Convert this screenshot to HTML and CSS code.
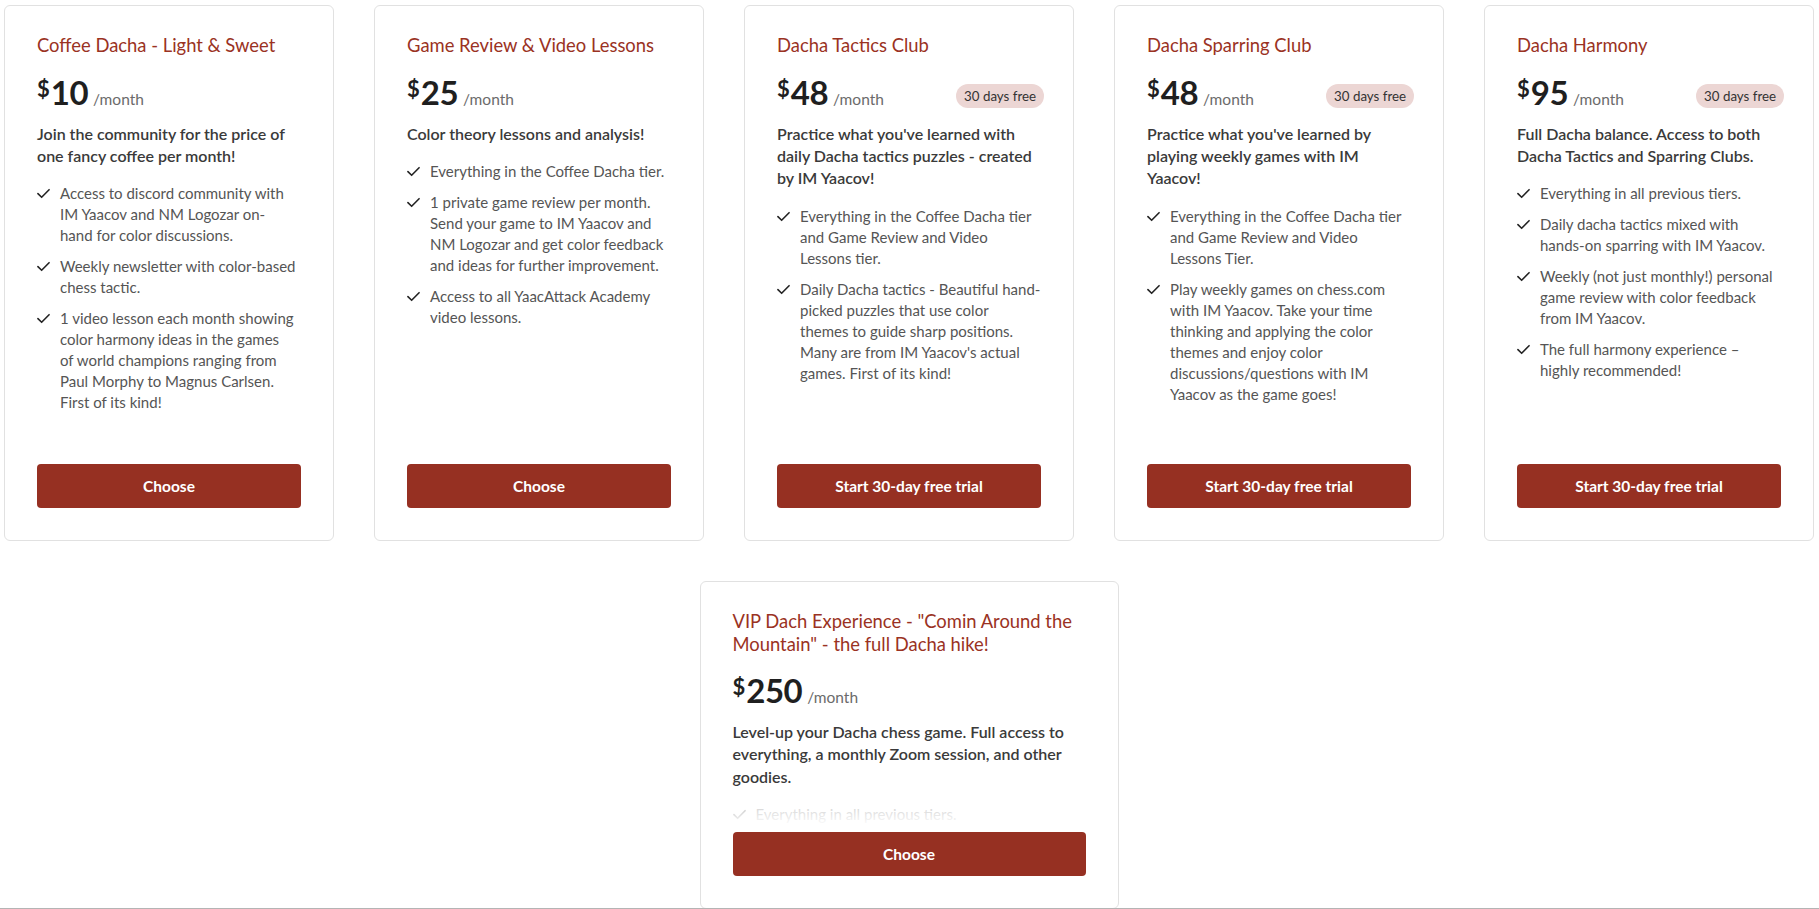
FILE: index.html
```html
<!DOCTYPE html>
<html lang="en">
<head>
<meta charset="utf-8">
<title>Dacha Membership Tiers</title>
<link rel="stylesheet" href="styles.css">
</head>
<body>
<main class="plans">
  <section class="card">
    <h2 class="title">Coffee Dacha - Light &amp; Sweet</h2>
    <div class="price"><span class="cur">$</span><span class="amt">10</span><span class="per">/month</span></div>
    <p class="desc">Join the community for the price of one fancy coffee per month!</p>
    <ul class="features">
      <li><svg class="check" viewBox="0 0 14 11"><path d="M1 5.6 L5 9.6 L13 1.4"/></svg><span>Access to discord community with IM&nbsp;Yaacov and NM&nbsp;Logozar on-<br>hand for color discussions.</span></li>
      <li><svg class="check" viewBox="0 0 14 11"><path d="M1 5.6 L5 9.6 L13 1.4"/></svg><span>Weekly newsletter with color-based chess tactic.</span></li>
      <li><svg class="check" viewBox="0 0 14 11"><path d="M1 5.6 L5 9.6 L13 1.4"/></svg><span>1 video lesson each month showing color harmony ideas in the games<br>of world champions ranging from Paul Morphy to Magnus Carlsen. First of its kind!</span></li>
    </ul>
    <button class="btn">Choose</button>
  </section>

  <section class="card">
    <h2 class="title">Game Review &amp; Video Lessons</h2>
    <div class="price"><span class="cur">$</span><span class="amt">25</span><span class="per">/month</span></div>
    <p class="desc">Color theory lessons and analysis!</p>
    <ul class="features">
      <li><svg class="check" viewBox="0 0 14 11"><path d="M1 5.6 L5 9.6 L13 1.4"/></svg><span>Everything in the Coffee Dacha tier.</span></li>
      <li><svg class="check" viewBox="0 0 14 11"><path d="M1 5.6 L5 9.6 L13 1.4"/></svg><span>1 private game review per month. Send your game to IM&nbsp;Yaacov and NM&nbsp;Logozar and get color feedback and ideas for further improvement.</span></li>
      <li><svg class="check" viewBox="0 0 14 11"><path d="M1 5.6 L5 9.6 L13 1.4"/></svg><span>Access to all YaacAttack Academy video lessons.</span></li>
    </ul>
    <button class="btn">Choose</button>
  </section>

  <section class="card">
    <h2 class="title">Dacha Tactics Club</h2>
    <div class="price"><span class="cur">$</span><span class="amt">48</span><span class="per">/month</span><span class="badge">30 days free</span></div>
    <p class="desc">Practice what you've learned with daily Dacha tactics puzzles - created by IM&nbsp;Yaacov!</p>
    <ul class="features">
      <li><svg class="check" viewBox="0 0 14 11"><path d="M1 5.6 L5 9.6 L13 1.4"/></svg><span>Everything in the Coffee Dacha tier and Game Review and Video Lessons tier.</span></li>
      <li><svg class="check" viewBox="0 0 14 11"><path d="M1 5.6 L5 9.6 L13 1.4"/></svg><span>Daily Dacha tactics - Beautiful hand-picked puzzles that use color<br>themes to guide sharp positions. Many are from IM&nbsp;Yaacov's actual<br>games. First of its kind!</span></li>
    </ul>
    <button class="btn">Start 30-day free trial</button>
  </section>

  <section class="card">
    <h2 class="title">Dacha Sparring Club</h2>
    <div class="price"><span class="cur">$</span><span class="amt">48</span><span class="per">/month</span><span class="badge">30 days free</span></div>
    <p class="desc">Practice what you've learned by playing weekly games with IM Yaacov!</p>
    <ul class="features">
      <li><svg class="check" viewBox="0 0 14 11"><path d="M1 5.6 L5 9.6 L13 1.4"/></svg><span>Everything in the Coffee Dacha tier and Game Review and Video Lessons Tier.</span></li>
      <li><svg class="check" viewBox="0 0 14 11"><path d="M1 5.6 L5 9.6 L13 1.4"/></svg><span>Play weekly games on chess.com with IM&nbsp;Yaacov. Take your time thinking and applying the color themes and enjoy color discussions/questions with IM Yaacov as the game goes!</span></li>
    </ul>
    <button class="btn">Start 30-day free trial</button>
  </section>

  <section class="card">
    <h2 class="title">Dacha Harmony</h2>
    <div class="price"><span class="cur">$</span><span class="amt">95</span><span class="per">/month</span><span class="badge">30 days free</span></div>
    <p class="desc">Full Dacha balance. Access to both Dacha Tactics and Sparring Clubs.</p>
    <ul class="features">
      <li><svg class="check" viewBox="0 0 14 11"><path d="M1 5.6 L5 9.6 L13 1.4"/></svg><span>Everything in all previous tiers.</span></li>
      <li><svg class="check" viewBox="0 0 14 11"><path d="M1 5.6 L5 9.6 L13 1.4"/></svg><span>Daily dacha tactics mixed with hands-on sparring with IM&nbsp;Yaacov.</span></li>
      <li><svg class="check" viewBox="0 0 14 11"><path d="M1 5.6 L5 9.6 L13 1.4"/></svg><span>Weekly (not just monthly!) personal game review with color feedback from IM&nbsp;Yaacov.</span></li>
      <li><svg class="check" viewBox="0 0 14 11"><path d="M1 5.6 L5 9.6 L13 1.4"/></svg><span>The full harmony experience – highly recommended!</span></li>
    </ul>
    <button class="btn">Start 30-day free trial</button>
  </section>

  <section class="card card-vip">
    <h2 class="title">VIP Dach Experience - "Comin Around the Mountain" - the full Dacha hike!</h2>
    <div class="price"><span class="cur">$</span><span class="amt">250</span><span class="per">/month</span></div>
    <p class="desc">Level-up your Dacha chess game. Full access to everything, a monthly Zoom session, and other goodies.</p>
    <div class="fade-wrap">
      <ul class="features">
        <li><svg class="check" viewBox="0 0 14 11"><path d="M1 5.6 L5 9.6 L13 1.4"/></svg><span>Everything in all previous tiers.</span></li>
      </ul>
    </div>
    <button class="btn">Choose</button>
  </section>
</main>
</body>
</html>
```
FILE: styles.css
```css
* { box-sizing: border-box; }

html, body {
  margin: 0;
  padding: 0;
  background: #ffffff;
  overflow: hidden;
}

body {
  font-family: "Lato", "Segoe UI", "Liberation Sans", sans-serif;
  color: #333333;
  height: 909px;
}

body::after {
  content: "";
  position: fixed;
  left: 0;
  right: 0;
  bottom: 0;
  height: 1px;
  background: #b4b4b4;
}

.plans {
  display: flex;
  flex-wrap: wrap;
  justify-content: center;
  gap: 40px;
  padding: 5px 5px 0 4px;
}

.card {
  width: 330px;
  height: 536px;
  display: flex;
  flex-direction: column;
  border: 1px solid #e1e1e1;
  border-radius: 6px;
  background: #fff;
  padding: 28px 32px 32px;
}

.card-vip {
  width: 419px;
  height: 328px;
}

.title {
  margin: 0;
  font-size: 18.4px;
  line-height: 22.5px;
  font-weight: 400;
  color: #9a3223;
}

.price {
  display: flex;
  align-items: baseline;
  height: 32px;
  margin-top: 19px;
  color: #1f1f1f;
}

.cur {
  align-self: flex-start;
  font-size: 22px;
  line-height: 1;
  font-weight: 700;
  margin-top: 2px;
  margin-right: 1px;
}

.amt {
  font-size: 33px;
  line-height: 32px;
  font-weight: 700;
  letter-spacing: -0.5px;
}

.per {
  font-size: 15.5px;
  color: #6b6b6b;
  margin-left: 5px;
}

.badge {
  align-self: flex-start;
  margin-left: auto;
  margin-right: -3px;
  margin-top: 8px;
  height: 24px;
  line-height: 24px;
  padding: 0 8px;
  border-radius: 12px;
  background: #ecd6d4;
  color: #333;
  font-size: 13.3px;
}

.desc {
  margin: 15px 0 16px;
  font-size: 16px;
  line-height: 22.4px;
  font-weight: 600;
  color: #3a3a3a;
}

.features {
  list-style: none;
  margin: 0;
  padding: 0;
  display: flex;
  flex-direction: column;
  gap: 10px;
}

.features li {
  display: flex;
  gap: 10px;
  font-size: 15px;
  line-height: 21px;
  color: #555555;
}

.check {
  flex: none;
  width: 13px;
  height: 11px;
  margin-top: 5px;
  fill: none;
  stroke: #222222;
  stroke-width: 1.7;
  stroke-linecap: round;
  stroke-linejoin: round;
}

.btn {
  margin-top: auto;
  flex: none;
  height: 44px;
  width: 100%;
  border: 0;
  border-radius: 4px;
  background: #963022;
  color: #ffffff;
  font-family: inherit;
  font-size: 15.5px;
  font-weight: 700;
  cursor: pointer;
}

.fade-wrap {
  position: relative;
  flex: 1;
  min-height: 0;
  overflow: hidden;
}

.fade-wrap::after {
  content: "";
  position: absolute;
  inset: 0;
  background: linear-gradient(to bottom, rgba(255,255,255,0.72), #ffffff 80%);
}
```
